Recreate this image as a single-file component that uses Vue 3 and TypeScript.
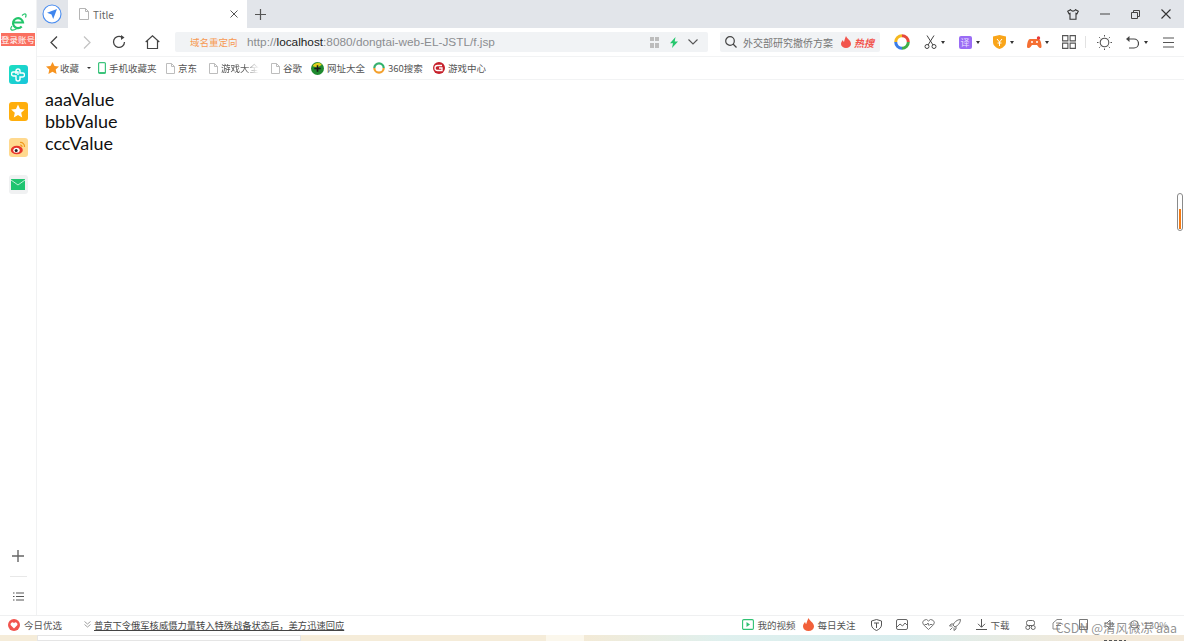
<script setup lang="ts">
interface Mark {
  label: string
  kind: 'page' | 'phone' | 'nav' | 'ring' | 'game'
  width: number
}

const bookmarks: Mark[] = [
  { label: '手机收藏夹', kind: 'phone', width: 68 },
  { label: '京东', kind: 'page', width: 43 },
  { label: '游戏大全', kind: 'page', width: 62 },
  { label: '谷歌', kind: 'page', width: 40 },
  { label: '网址大全', kind: 'nav', width: 62 },
  { label: '360搜索', kind: 'ring', width: 60 },
  { label: '游戏中心', kind: 'game', width: 60 },
]

const values = ['aaaValue', 'bbbValue', 'cccValue']
</script>

<template>
  <div class="browser">
    <div class="upper">
      <aside class="side">
        <div class="logo">
          <svg width="20" height="20" viewBox="0 0 20 20">
            <path d="M5.500 10.500h9.500a5 5 0 1 0-1.300 4" fill="none" stroke="#22c56a" stroke-width="2.200" />
            <path d="M4 14c-3 4 0 5.500 5 2.500M14 3.500c3-2.500 5-2 3.500 2" fill="none" stroke="#22c56a" stroke-width="1.200" />
          </svg>
          <span class="login">登录账号</span>
        </div>
        <div class="apps">
          <span class="app teal">
            <svg width="14" height="14" viewBox="0 0 14 14"><path d="M5 6V3a2 2 0 0 1 4 0v2h2.500a2 2 0 0 1 0 4H9v2a2 2 0 0 1-4 0V8H2.500a2 2 0 0 1 0-4H7v3" fill="none" stroke="#fff" stroke-width="1.400" /></svg>
          </span>
          <span class="app amber">
            <svg width="14" height="14" viewBox="0 0 14 14"><path d="M7 .5l2 4.500 4.800.5-3.600 3.200 1 4.800L7 11l-4.200 2.500 1-4.800L.2 5.500 5 5z" fill="#fff" /></svg>
          </span>
          <span class="app weibo">
            <svg width="16" height="16" viewBox="0 0 16 16">
              <ellipse cx="6.800" cy="10" rx="6" ry="4.300" fill="#e6352b" />
              <ellipse cx="6.500" cy="10.200" rx="3.200" ry="2.500" fill="#fff" />
              <circle cx="6.200" cy="10.400" r="1.500" fill="#222" />
              <path d="M10 2.500a4 4 0 0 1 4.500 4.500M10 5a1.800 1.800 0 0 1 2 2" fill="none" stroke="#f09a1e" stroke-width="1.200" />
            </svg>
          </span>
          <span class="app mail">
            <svg width="14" height="11" viewBox="0 0 14 11"><rect width="14" height="11" fill="#1fc470" /><path d="M0 1l7 5 7-5" fill="none" stroke="#bff0d5" stroke-width="1" /></svg>
          </span>
        </div>
        <div class="side-foot">
          <svg width="12" height="12" viewBox="0 0 12 12"><path d="M6 0v12M0 6h12" stroke="#666" stroke-width="1.400" /></svg>
          <span class="side-rule"></span>
          <svg width="11" height="9" viewBox="0 0 11 9"><path d="M0 1h1.500M3 1h8M0 4.500h1.500M3 4.500h8M0 8h1.500M3 8h8" stroke="#555" stroke-width="1.200" /></svg>
        </div>
      </aside>

      <div class="main">
        <div class="tabbar">
          <span class="tab-nav">
            <svg width="20" height="20" viewBox="0 0 20 20">
              <circle cx="10" cy="10" r="9" fill="#fff" stroke="#4a8df0" stroke-width="1.100" />
              <path d="M15 5l-3.800 10-1.700-4.500L5 8.800z" fill="#3f86ee" />
            </svg>
          </span>
          <div class="tab">
            <svg class="page-ico" width="10" height="12" viewBox="0 0 10 12"><path d="M.5.500h6l3 3v8h-9zM6.500.500v3h3" fill="none" stroke="#b5b5b5" /></svg>
            <span class="tab-title">Title</span>
            <svg class="tab-close" width="8" height="8" viewBox="0 0 8 8"><path d="M.5.500l7 7M7.500.500l-7 7" stroke="#555" stroke-width="1" /></svg>
          </div>
          <svg class="tab-add" width="11" height="11" viewBox="0 0 11 11"><path d="M5.500 0v11M0 5.500h11" stroke="#555" stroke-width="1.200" /></svg>
          <div class="win-btns">
            <svg width="12" height="11" viewBox="0 0 12 11"><path d="M3.500.700L.7 2.200l1.300 2.500 1-.4v6h6v-6l1 .4 1.300-2.500L8.500.700C8 2.600 4 2.600 3.500.700z" fill="none" stroke="#333" stroke-width="1.100" /></svg>
            <svg width="10" height="10" viewBox="0 0 10 10"><path d="M0 5h10" stroke="#444" /></svg>
            <svg width="9" height="9" viewBox="0 0 9 9"><path d="M.5 2.500h6v6h-6zM2.500 2.500v-2h6v6h-2" fill="none" stroke="#444" /></svg>
            <svg width="10" height="10" viewBox="0 0 10 10"><path d="M.5.500l9 9M9.500.500l-9 9" stroke="#333" stroke-width="1.100" /></svg>
          </div>
        </div>

        <div class="toolbar">
          <div class="nav-btns">
            <svg width="8" height="13" viewBox="0 0 8 13"><path d="M7 .5L1 6.500l6 6" fill="none" stroke="#444" stroke-width="1.300" /></svg>
            <svg class="n-fwd" width="8" height="13" viewBox="0 0 8 13"><path d="M1 .5l6 6-6 6" fill="none" stroke="#c4c4c4" stroke-width="1.300" /></svg>
            <svg class="n-reload" width="14" height="14" viewBox="0 0 14 14"><path d="M12.500 7A5.500 5.500 0 1 1 10 2.300" fill="none" stroke="#444" stroke-width="1.300" /><path d="M9 0l3.500 2.600L9 5z" fill="#444" /></svg>
            <svg class="n-home" width="15" height="14" viewBox="0 0 15 14"><path d="M.7 7L7.500.8 14.300 7M2.500 5.500v8h10v-8" fill="none" stroke="#444" stroke-width="1.200" /></svg>
          </div>
          <div class="address">
            <span class="redirect">域名重定向</span>
            <span class="url">http://<b>localhost</b>:8080/dongtai-web-EL-JSTL/f.jsp</span>
            <svg class="qr" width="9" height="11" viewBox="0 0 9 11"><path d="M0 0h4v4H0zM5 0h4v4H5zM0 6h4v5H0zM5 6h4v5H5z" fill="#bcbcbc" /></svg>
            <svg class="bolt" width="8" height="11" viewBox="0 0 8 11"><path d="M5.500 0L0 6.200h3L2 11l6-6.500H4.700z" fill="#25c76d" /></svg>
            <svg class="chev" width="10" height="6" viewBox="0 0 10 6"><path d="M.5.500L5 5 9.500.500" fill="none" stroke="#555" stroke-width="1.100" /></svg>
          </div>
          <div class="search">
            <svg width="12" height="12" viewBox="0 0 12 12"><circle cx="5" cy="5" r="4.300" fill="none" stroke="#444" stroke-width="1.200" /><path d="M8 8l3.500 3.500" stroke="#444" stroke-width="1.300" /></svg>
            <span class="query">外交部研究撤侨方案</span>
            <svg class="flame" width="10" height="12" viewBox="0 0 10 12"><path d="M5 0c1 3 5 4 5 8a5 4 0 0 1-10 0c0-2 1-3 2-4 0 1 .5 1.500 1 2C3.500 4 4 2 5 0z" fill="#f2554d" /></svg>
            <span class="hot">热搜</span>
          </div>
          <div class="tools">
            <svg class="t-ring" width="16" height="16" viewBox="0 0 16 16">
              <path d="M8 1.700A6.300 6.300 0 0 1 14.300 8" fill="none" stroke="#e6493a" stroke-width="3" />
              <path d="M14.300 8A6.300 6.300 0 0 1 8 14.300" fill="none" stroke="#3fae49" stroke-width="3" />
              <path d="M8 14.300A6.300 6.300 0 0 1 1.700 8" fill="none" stroke="#3b7de8" stroke-width="3" />
              <path d="M1.700 8A6.300 6.300 0 0 1 8 1.700" fill="none" stroke="#f5b81f" stroke-width="3" />
            </svg>
            <span class="t-item t-cut">
              <svg width="13" height="14" viewBox="0 0 13 14"><circle cx="3" cy="11.500" r="2" fill="none" stroke="#444" /><circle cx="10" cy="11.500" r="2" fill="none" stroke="#444" /><path d="M4 10L10 .5M9 10L3 .5" stroke="#444" /></svg>
              <i class="caret"></i>
            </span>
            <span class="t-item t-trans">
              <span class="trans">译</span>
              <i class="caret"></i>
            </span>
            <span class="t-item t-shield">
              <svg width="13" height="14" viewBox="0 0 13 14"><path d="M6.500 0L13 1.500V7c0 3.500-3 5.800-6.500 7C3 12.800 0 10.500 0 7V1.500z" fill="#f9a51a" /><path d="M4 4l2.500 3L9 4M6.500 7v4M4.500 8h4" fill="none" stroke="#fff" /></svg>
              <i class="caret"></i>
            </span>
            <span class="t-item t-game">
              <svg width="15" height="13" viewBox="0 0 15 13"><path d="M3 3h8.500c2 0 3 5 3 7.500 0 2-2 2-3 .5L10 9H5l-1.500 2c-1 1.500-3.500 1.500-3.500-.5C0 8 1 3 3 3z" fill="#f56f32" /><circle cx="11.500" cy="2" r="1.700" fill="#e93b3b" /><circle cx="5" cy="6" r="1" fill="#fff" /><circle cx="10" cy="6" r="1" fill="#fff" /></svg>
              <i class="caret"></i>
            </span>
            <svg class="t-grid" width="14" height="14" viewBox="0 0 14 14"><path d="M.6.600h5.300v5.300H.6zM8.100.600h5.300v5.300H8.100zM.6 8.100h5.300v5.300H.6zM8.100 8.100h5.300v5.300H8.100z" fill="none" stroke="#555" stroke-width="1.100" /></svg>
            <span class="t-rule"></span>
            <svg class="t-sun" width="15" height="15" viewBox="0 0 15 15"><circle cx="7.500" cy="7.500" r="4.300" fill="none" stroke="#555" stroke-width="1.100" /><path d="M7.500 0v1.500M7.500 13.500V15M0 7.500h1.500M13.500 7.500H15M2.200 2.200l1 1M11.800 11.800l1 1M2.200 12.800l1-1M11.800 3.200l1-1" stroke="#555" /></svg>
            <span class="t-item t-undo">
              <svg width="13" height="13" viewBox="0 0 13 13"><path d="M3 3h5a4.300 4.300 0 0 1 0 9H3" fill="none" stroke="#444" stroke-width="1.200" /><path d="M0 3l3.500-3v6z" fill="#444" /></svg>
              <i class="caret"></i>
            </span>
            <svg class="t-menu" width="11" height="11" viewBox="0 0 11 11"><path d="M0 1h11M0 5.500h11M0 10h11" stroke="#555" stroke-width="1.200" /></svg>
          </div>
        </div>

        <div class="bookmarks">
          <span class="fav">
            <svg width="13" height="12" viewBox="0 0 13 12"><path d="M6.500 0l2 4 4.500.6-3.300 3 .9 4.400-4.100-2.200L2.400 12l.9-4.400L0 4.600 4.500 4z" fill="#f79420" /></svg>
            收藏
            <i class="caret small"></i>
          </span>
          <span v-for="m in bookmarks" :key="m.label" class="mark" :style="{ width: `${m.width}px` }">
            <svg v-if="m.kind === 'page'" width="9" height="11" viewBox="0 0 9 11"><path d="M.5.500h5l3 3v7h-8zM5.500.500v3h3" fill="none" stroke="#bdbdbd" /></svg>
            <svg v-else-if="m.kind === 'phone'" width="8" height="12" viewBox="0 0 8 12"><rect x=".6" y=".6" width="6.800" height="10.800" rx="1" fill="none" stroke="#3cc47c" stroke-width="1.200" /><path d="M0 10.500h8" stroke="#3cc47c" /></svg>
            <svg v-else-if="m.kind === 'nav'" width="13" height="13" viewBox="0 0 12 12"><circle cx="6" cy="6" r="6" fill="#1f8a2f" /><path d="M1.500 4A5 5 0 0 1 10 2.500L6 5z" fill="#e0d01c" /><path d="M6 3v6M3 6h6" stroke="#181818" stroke-width="1.500" /></svg>
            <svg v-else-if="m.kind === 'ring'" width="12" height="12" viewBox="0 0 11 11"><path d="M5.500 1.200a4.300 4.300 0 0 1 4.300 4.300" fill="none" stroke="#2fb36b" stroke-width="2" /><path d="M1.200 5.500a4.300 4.300 0 0 1 4.300-4.300" fill="none" stroke="#39b070" stroke-width="2" /><path d="M9.800 5.500a4.300 4.300 0 0 1-8.600 0" fill="none" stroke="#f3a02d" stroke-width="2" /></svg>
            <svg v-else width="12" height="12" viewBox="0 0 12 12"><circle cx="6" cy="6" r="6" fill="#c6202b" /><path d="M9 3.500H4.500a2.500 2.500 0 0 0 0 5H9V6H6" fill="none" stroke="#fff" stroke-width="1.300" /></svg>
            <span :class="{ faded: m.label === '游戏大全' }">{{ m.label }}</span>
          </span>
        </div>

        <main class="content">
          <div v-for="v in values" :key="v" class="line">{{ v }}</div>
        </main>
      </div>
    </div>

    <footer class="status">
      <div class="news">
        <svg width="12" height="12" viewBox="0 0 12 12"><circle cx="6" cy="6" r="6" fill="#f1544e" /><path d="M6 9.500L2.800 6.300a1.800 1.800 0 0 1 3.200-2 1.800 1.800 0 0 1 3.200 2z" fill="#fff" /></svg>
        <span class="today">今日优选</span>
        <svg class="dbl" width="7" height="7" viewBox="0 0 7 7"><path d="M.5.500L3.500 3l3-2.500M.5 3.500l3 2.500 3-2.500" fill="none" stroke="#888" stroke-width=".8" /></svg>
        <span class="headline">普京下令俄军核威慑力量转入特殊战备状态后，美方迅速回应</span>
      </div>
      <div class="status-right">
        <span class="st st-video">
          <svg width="12" height="11" viewBox="0 0 12 11"><rect x=".6" y=".6" width="10.800" height="9.800" rx="1.200" fill="none" stroke="#2fc172" stroke-width="1.100" /><path d="M4.500 3l3.500 2.500L4.500 8z" fill="#2fc172" /></svg>
          我的视频
        </span>
        <span class="st st-fire">
          <svg width="11" height="13" viewBox="0 0 11 13"><path d="M5.500 0c1 3 5.500 4.500 5.500 8.500a5.500 4.500 0 0 1-11 0c0-2 1-3.500 2.200-4.500 0 1 .5 1.700 1 2C3.800 4 4.500 2 5.500 0z" fill="#f2603a" /></svg>
          每日关注
        </span>
        <svg class="st-i st-first" width="11" height="12" viewBox="0 0 11 12"><path d="M5.500.5l5 1.500v4c0 2.500-2.500 4.500-5 5.500-2.500-1-5-3-5-5.500V2zM3 4h5M5.500 4v5" fill="none" stroke="#555" /></svg>
        <svg class="st-i" width="12" height="11" viewBox="0 0 12 11"><rect x=".5" y=".5" width="11" height="10" rx="1.500" fill="none" stroke="#666" /><path d="M1 8l3-3 2.500 2L9 4l2.500 2.500" fill="none" stroke="#666" /></svg>
        <svg class="st-i" width="13" height="11" viewBox="0 0 13 11"><path d="M6.500 10.500L1.300 5.500A3 3 0 0 1 6.500 2a3 3 0 0 1 5.200 3.500zM2.500 5.500h2.500l1-1.500 1 2.500 1-1h2.500" fill="none" stroke="#666" stroke-width=".9" /></svg>
        <svg class="st-i" width="12" height="12" viewBox="0 0 12 12"><path d="M11.500.5C8 .5 5.500 3 4 6l2 2c3-1.500 5.500-4 5.500-7.500zM4.500 5H2L.5 7h3M7 7.500V10l-2 1.500v-3M3.500 8.500L1 11" fill="none" stroke="#666" stroke-width=".9" /></svg>
        <span class="st st-dl">
          <svg width="11" height="11" viewBox="0 0 11 11"><path d="M5.500 0v8M2 4.800l3.500 3.500L9 4.800M0 10.500h11" fill="none" stroke="#555" /></svg>
          下载
        </span>
        <svg class="st-j" width="11" height="10" viewBox="0 0 11 10"><rect x="1.500" y=".5" width="8" height="5" rx="2" fill="none" stroke="#666" /><circle cx="2.800" cy="7.500" r="2" fill="none" stroke="#666" /><circle cx="8.200" cy="7.500" r="2" fill="none" stroke="#666" /></svg>
        <svg class="st-j" width="11" height="11" viewBox="0 0 11 11"><path d="M1 10V4l4-3.500h5M1 10h7M4 4h5M4 6.500h5" fill="none" stroke="#888" /></svg>
        <svg class="st-j" width="9" height="11" viewBox="0 0 9 11"><path d="M.5.500h8v10h-8zM.5 8h8" fill="none" stroke="#777" /></svg>
        <svg class="st-j" width="11" height="11" viewBox="0 0 11 11"><path d="M1 4h2l3-3v9L3 7H1zM8 3a3.500 3.500 0 0 1 0 5" fill="none" stroke="#777" /></svg>
        <span class="zoom">
          <svg width="10" height="10" viewBox="0 0 10 10"><circle cx="4.500" cy="4.500" r="3.800" fill="none" stroke="#777" /><path d="M7.200 7.200L9.500 9.500" stroke="#777" /></svg>
          130%
        </span>
      </div>
    </footer>
    <div class="desktop">
      <span class="paper"></span>
      <i class="clock-top"></i>
    </div>
    <span class="scroll-pill"><i></i></span>
    <span class="watermark">CSDN @清风微凉 aaa</span>
  </div>
</template>

<style>
html,
body {
  margin: 0;
  overflow: hidden;
}
</style>

<style scoped>
.browser {
  position: relative;
  display: flex;
  flex-direction: column;
  width: 1184px;
  height: 641px;
  overflow: hidden;
  background: #fff;
  font-family: 'Noto Sans CJK SC', 'Noto Sans', sans-serif;
  color: #555;
}
.upper {
  display: flex;
  flex: 1;
  min-height: 0;
}

.side {
  display: flex;
  flex-direction: column;
  align-items: center;
  flex: none;
  width: 36px;
  border-right: 1px solid #f1f2f3;
}
.logo {
  display: flex;
  flex-direction: column;
  align-items: center;
  padding-top: 12px;
  height: 52px;
  box-sizing: border-box;
}
.login {
  display: block;
  width: 34px;
  height: 13px;
  margin-top: 1px;
  background: #fa6f60;
  color: #fff;
  font-size: 8.500px;
  line-height: 13px;
  text-align: center;
  white-space: nowrap;
}
.apps {
  display: flex;
  flex-direction: column;
  gap: 17.500px;
  align-items: center;
  margin-top: 13px;
}
.app {
  display: flex;
  align-items: center;
  justify-content: center;
  width: 19px;
  height: 19px;
  border-radius: 3px;
}
.teal {
  background: linear-gradient(135deg, #1de0c0, #18c4dc);
}
.amber {
  background: #ffae0c;
}
.weibo {
  background: #ffd98f;
}
.mail {
  background: #f0f1f2;
}
.side-foot {
  display: flex;
  flex-direction: column;
  align-items: center;
  margin-top: auto;
  padding-bottom: 14px;
}
.side-rule {
  width: 17px;
  height: 1px;
  margin: 14px 0 15px;
  background: #e8e8e8;
}

.main {
  display: flex;
  flex-direction: column;
  flex: 1;
  min-width: 0;
}
.tabbar {
  display: flex;
  align-items: center;
  flex: none;
  height: 28px;
  background: #e2e5ea;
}
.tab-nav {
  display: flex;
  align-items: center;
  justify-content: center;
  width: 31px;
  height: 28px;
}
.tab-nav svg {
  margin-left: -1px;
}
.tab {
  display: flex;
  align-items: center;
  width: 179px;
  height: 28px;
  padding: 0 0 0 11px;
  box-sizing: border-box;
  background: #fff;
}
.tab-title {
  margin-left: 4px;
  font-size: 10px;
  color: #666;
}
.tab-close {
  margin-left: auto;
  margin-right: 9px;
}
.tab-add {
  margin-left: 8px;
}
.win-btns {
  display: flex;
  align-items: center;
  gap: 21px;
  margin-left: auto;
  padding-right: 13px;
}

.toolbar {
  display: flex;
  align-items: center;
  flex: none;
  height: 29px;
  background: #fff;
  border-bottom: 1px solid #f2f3f4;
  box-sizing: border-box;
}
.nav-btns {
  display: flex;
  align-items: center;
  width: 138px;
  padding-left: 13px;
  box-sizing: border-box;
}
.n-fwd {
  margin-left: 25px;
}
.n-reload {
  margin-left: 21px;
}
.n-home {
  margin-left: 18.500px;
}
.address {
  display: flex;
  align-items: center;
  width: 533px;
  height: 20px;
  padding-left: 15px;
  box-sizing: border-box;
  background: #f1f3f5;
  border-radius: 2px;
}
.redirect {
  width: 57px;
  font-size: 9.500px;
  color: #f79a52;
  white-space: nowrap;
}
.url {
  font-family: 'Liberation Sans', sans-serif;
  font-size: 11.800px;
  color: #8b8d90;
  white-space: nowrap;
}
.url b {
  font-weight: 400;
  color: #222;
}
.qr {
  margin-left: auto;
}
.bolt {
  margin-left: 11.500px;
}
.chev {
  margin: 0 10px 0 10px;
}
.search {
  display: flex;
  align-items: center;
  width: 160px;
  height: 20px;
  margin-left: 12px;
  padding-left: 5px;
  box-sizing: border-box;
  background: #f1f3f5;
  border-radius: 2px;
}
.query {
  margin-left: 6px;
  font-size: 10px;
  color: #777;
  white-space: nowrap;
}
.flame {
  margin-left: 8px;
}
.hot {
  margin-left: 3px;
  font-size: 10px;
  font-weight: 700;
  font-style: italic;
  color: #f2554d;
  white-space: nowrap;
}
.tools {
  display: flex;
  align-items: center;
  flex: 1;
  padding-left: 14px;
}
.t-item {
  display: flex;
  align-items: center;
  gap: 4px;
}
.caret {
  display: block;
  width: 0;
  height: 0;
  border-left: 2.500px solid transparent;
  border-right: 2.500px solid transparent;
  border-top: 3px solid #333;
}
.t-cut {
  margin-left: 13.500px;
}
.t-trans {
  margin-left: 14px;
}
.trans {
  display: flex;
  align-items: center;
  justify-content: center;
  width: 13px;
  height: 13px;
  border-radius: 2px;
  background: #9a6cf5;
  color: #e7dcff;
  font-size: 9px;
  line-height: 13px;
}
.t-shield {
  margin-left: 13px;
}
.t-game {
  margin-left: 13px;
  gap: 3px;
}
.t-grid {
  margin-left: 13.500px;
}
.t-rule {
  width: 1px;
  height: 12px;
  margin-left: 9px;
  background: #e2e2e2;
}
.t-sun {
  margin-left: 10.500px;
}
.t-undo {
  margin-left: 14px;
  gap: 5px;
}
.t-menu {
  margin-left: 15px;
}

.bookmarks {
  display: flex;
  align-items: center;
  flex: none;
  height: 23px;
  padding-left: 9px;
  border-bottom: 1px solid #f2f3f4;
  box-sizing: border-box;
  font-size: 9.500px;
  white-space: nowrap;
}
.fav {
  display: flex;
  align-items: center;
  gap: 1px;
  width: 52px;
}
.caret.small {
  margin-left: 7px;
  border-left-width: 2px;
  border-right-width: 2px;
  border-top-width: 2px;
}
.mark {
  display: flex;
  align-items: center;
  gap: 3px;
  flex: none;
}
.faded {
  -webkit-mask-image: linear-gradient(90deg, #000 60%, transparent);
  mask-image: linear-gradient(90deg, #000 60%, transparent);
}

.content {
  flex: 1;
  padding: 9px 8px;
  font-family: Lato, 'Noto Sans', sans-serif;
  font-size: 18px;
  line-height: 21.800px;
  color: #111;
}

.status {
  display: flex;
  align-items: center;
  justify-content: space-between;
  flex: none;
  height: 20px;
  padding-bottom: 2px;
  border-top: 1px solid #eff0f1;
  box-sizing: border-box;
  font-size: 9.500px;
  white-space: nowrap;
  background: #fff;
}
.news {
  display: flex;
  align-items: center;
  padding-left: 8px;
}
.today {
  margin-left: 4px;
}
.dbl {
  margin-left: 22px;
}
.headline {
  margin-left: 3px;
  font-size: 9.280px;
  color: #444;
  text-decoration: underline;
}
.status-right {
  display: flex;
  align-items: center;
  padding-right: 16px;
}
.st {
  display: flex;
  align-items: center;
  gap: 3px;
}
.st-fire {
  margin-left: 8px;
}
.st-i {
  margin-left: 14px;
}
.st-first {
  margin-left: 16px;
}
.st-dl {
  margin-left: 15px;
}
.st-j {
  margin-left: 16px;
}
.zoom {
  display: flex;
  align-items: center;
  gap: 3px;
  margin-left: 15px;
  color: #888;
}

.desktop {
  position: relative;
  flex: none;
  height: 6px;
  padding-left: 37px;
  background: linear-gradient(
    90deg,
    #f5ecd9 0,
    #f5ecd9 546px,
    #fbf7ec 546px,
    #fbf7ec 584px,
    #f3ead6 584px,
    #dff0ee 720px,
    #d9edee 900px,
    #f3e9d9 1090px
  );
}
.paper {
  display: block;
  width: 264px;
  height: 6px;
  background: #fff;
  border: 1px solid #e5e5e5;
  box-sizing: border-box;
}
.clock-top {
  position: absolute;
  left: 1104px;
  bottom: 0;
  width: 22px;
  height: 1px;
  background: repeating-linear-gradient(90deg, #555 0 3px, transparent 3px 5px);
}

.scroll-pill {
  position: absolute;
  top: 193px;
  right: 1px;
  width: 6px;
  height: 38px;
  border: 1px solid #8a8a8a;
  border-radius: 4px;
  box-sizing: border-box;
  background: #fff;
}
.scroll-pill i {
  position: absolute;
  left: 1px;
  top: 15px;
  bottom: 1px;
  width: 2px;
  background: #f57a12;
}
.watermark {
  position: absolute;
  right: 7px;
  bottom: 4px;
  font-size: 12.500px;
  color: rgba(110, 110, 110, 0.75);
  white-space: nowrap;
}
</style>
